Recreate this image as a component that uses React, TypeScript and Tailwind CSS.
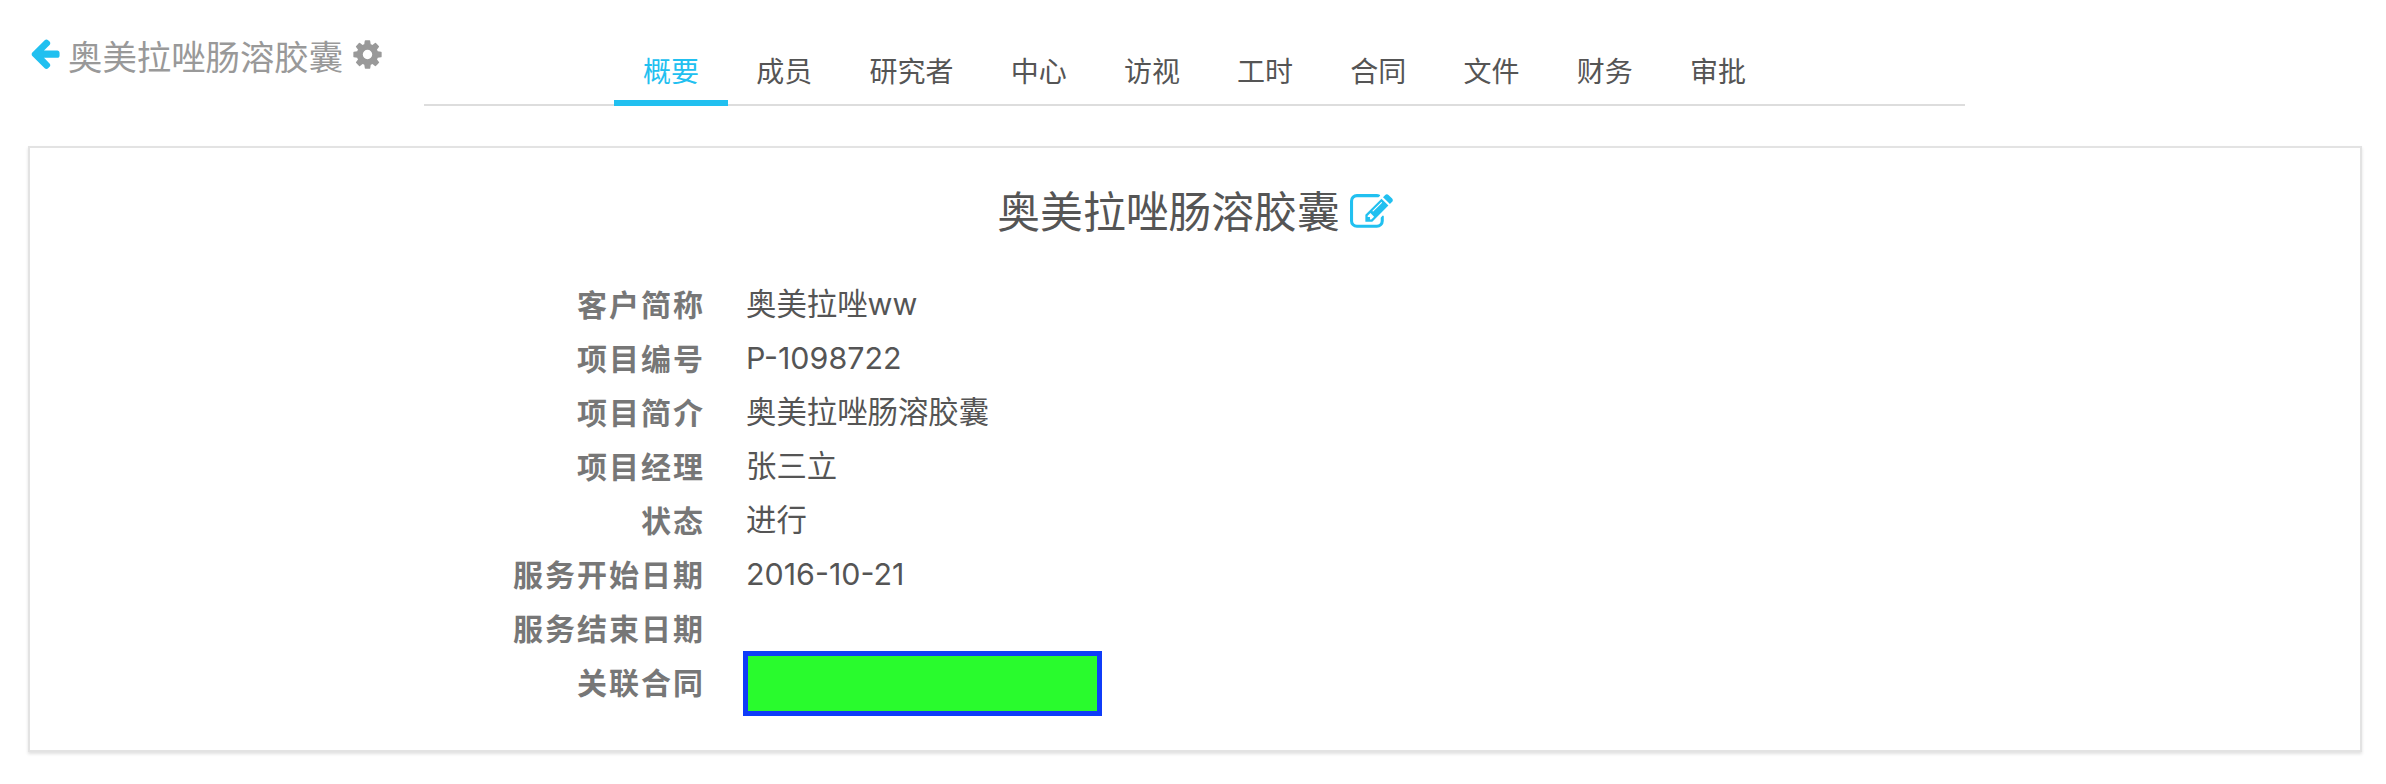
const FONT = "font-['Inter','Noto_Sans_CJK_SC',sans-serif]";

const tabs = ["概要", "成员", "研究者", "中心", "访视", "工时", "合同", "文件", "财务", "审批"];

const rows = [
  { label: "客户简称", value: "奥美拉唑ww" },
  { label: "项目编号", value: "P-1098722" },
  { label: "项目简介", value: "奥美拉唑肠溶胶囊" },
  { label: "项目经理", value: "张三立" },
  { label: "状态", value: "进行" },
  { label: "服务开始日期", value: "2016-10-21" },
  { label: "服务结束日期", value: "" },
];

const ArrowLeftIcon = ({ className }: { className?: string }) => (
  <svg viewBox="0 0 1792 1792" fill="currentColor" className={className}>
    <path d="M1664 896v128q0 53-32.5 90.5t-84.5 37.5h-704l293 294q38 36 38 90t-38 90l-75 76q-37 37-90 37-52 0-91-37l-651-652q-37-37-37-90 0-52 37-91l651-650q38-38 91-38 52 0 90 38l75 74q38 38 38 91t-38 91l-293 293h704q52 0 84.5 37.5t32.5 90.5z" />
  </svg>
);

const CogIcon = ({ className }: { className?: string }) => (
  <svg viewBox="0 0 1792 1792" fill="currentColor" className={className}>
    <path d="M1152 896q0-106-75-181t-181-75-181 75-75 181 75 181 181 75 181-75 75-181zm512-109v222q0 12-8 23t-20 13l-185 28q-19 54-39 91 35 50 107 138 10 12 10 25t-9 23q-27 37-99 108t-94 71q-12 0-26-9l-138-108q-44 23-91 38-16 136-29 186-7 28-36 28h-222q-14 0-24.5-8.5t-11.5-21.5l-28-184q-49-16-90-37l-141 107q-10 9-25 9-14 0-25-11-126-114-165-168-7-10-7-23 0-12 8-23 15-21 51-66.5t54-70.5q-27-50-41-99l-183-27q-13-2-21-12.5t-8-23.5v-222q0-12 8-23t19-13l186-28q14-46 39-92-40-57-107-138-10-12-10-24 0-10 9-23 26-36 98.5-107.5t94.5-71.5q13 0 26 10l138 107q44-23 91-38 16-136 29-186 7-28 36-28h222q14 0 24.5 8.5t11.5 21.5l28 184q49 16 90 37l142-107q9-9 24-9 13 0 25 10 129 119 165 170 7 8 7 22 0 12-8 23-15 21-51 66.5t-54 70.5q26 50 41 98l183 28q13 2 21 12.5t8 23.5z" />
  </svg>
);

const EditIcon = ({ className }: { className?: string }) => (
  <svg viewBox="0 0 1792 1792" fill="currentColor" className={className}>
    <path d="M888 1184l116-116-152-152-116 116v56h96v96h56zm440-720q-16-16-33 1l-350 350q-17 17-1 33t33-1l350-350q17-17 1-33zm80 594v190q0 119-84.5 203.5t-203.5 84.5h-832q-119 0-203.5-84.5t-84.5-203.5v-832q0-119 84.5-203.5t203.5-84.5h832q63 0 117 25 15 7 18 23 3 17-9 29l-49 49q-14 14-32 8-23-6-45-6h-832q-66 0-113 47t-47 113v832q0 66 47 113t113 47h832q66 0 113-47t47-113v-126q0-13 9-22l64-64q15-15 35-7t20 29zm-96-738l288 288-672 672h-288v-288zm444 132l-92 92-288-288 92-92q28-28 68-28t68 28l152 152q28 28 28 68t-28 68z" />
  </svg>
);

export default function App() {
  return (
    <div className={`${FONT} min-h-screen bg-white text-[#555]`}>
      <div className="flex h-[106px]">
        <div className="w-[424px] pl-[28px] pt-[35px] flex items-start text-[#999]">
          <ArrowLeftIcon className="w-[34px] h-[34px] mt-[1px] text-[#21c0f0]" />
          <span className="ml-[6px] text-[34.4px] leading-[46px]">奥美拉唑肠溶胶囊</span>
          <CogIcon className="ml-[8px] w-[33px] h-[33px] mt-[3px]" />
        </div>
        <nav className="w-[1541px] h-[106px] border-b-2 border-[#ddd] flex justify-center items-end">
          {tabs.map((tab, i) => (
            <div
              key={tab}
              className={`px-[28.6px] h-[53px] -mb-[2px] text-[28px] leading-[38px] ${i === 0 ? "text-[#21c0f0] border-b-[6px] border-[#21c0f0]" : "text-[#555]"}`}
            >
              {tab}
            </div>
          ))}
        </nav>
      </div>

      <div className="ml-[28px] mr-[24px] mt-[40px] h-[606px] border-2 border-[#e3e3e3] shadow-[0_2px_3px_rgba(0,0,0,0.12)]">
        <div className="flex justify-center items-center pt-[37px]">
          <span className="text-[42.8px] leading-[56px]">奥美拉唑肠溶胶囊</span>
          <EditIcon className="ml-[10px] w-[43px] h-[43px] -mt-[2px] text-[#21c0f0]" />
        </div>
        <div className="mt-[37px] flex flex-col">
          {rows.map((row) => (
            <div key={row.label} className="flex h-[54px] items-center">
              <div className="w-[675px] text-right text-[30px] font-bold tracking-[2px] text-[#777]">{row.label}</div>
              <div className="ml-[41px] text-[30.4px]">{row.value}</div>
            </div>
          ))}
          <div className="flex h-[54px] items-center">
            <div className="w-[675px] text-right text-[30px] font-bold tracking-[2px] text-[#777]">关联合同</div>
            <div className="ml-[38px] w-[359px] h-[65px] shrink-0 bg-[#29fb2d] border-[5px] border-[#0f3cf9]" />
          </div>
        </div>
      </div>
    </div>
  );
}
